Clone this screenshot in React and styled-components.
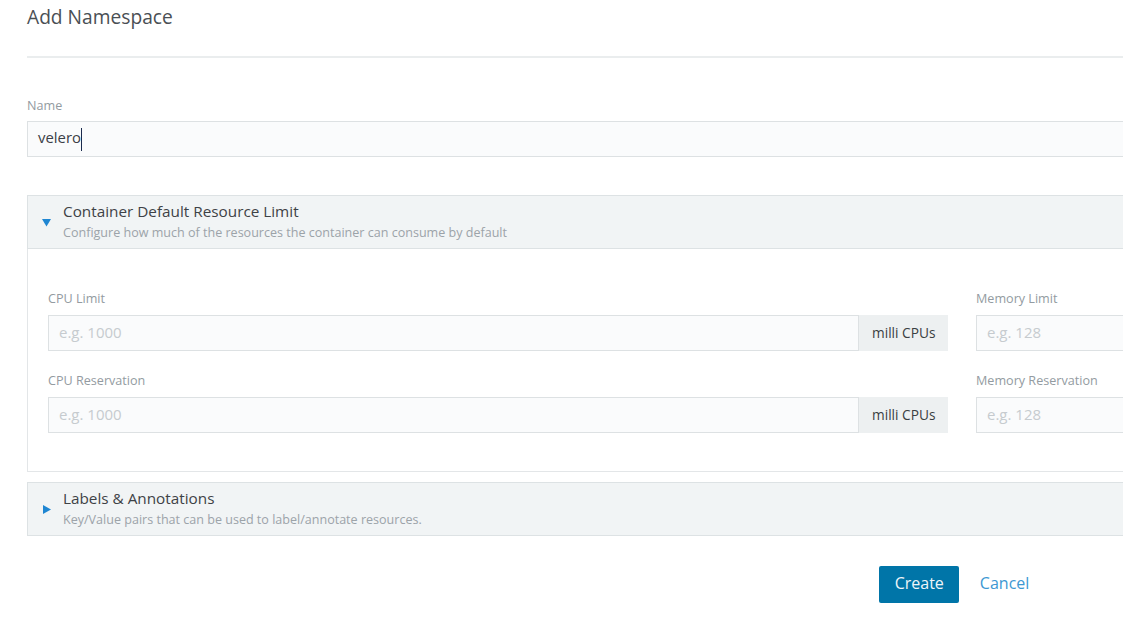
import React from "react";
import styled, { createGlobalStyle } from "styled-components";

const GlobalStyle = createGlobalStyle`
  html, body { margin: 0; padding: 0; overflow: hidden; background: #ffffff; }
  body { font-family: "Open Sans", "Liberation Sans", sans-serif; color: #444; }
  * { box-sizing: border-box; }
`;

const Page = styled.div`
  width: 1870px;
  margin-left: 27px;
  padding-top: 4px;
`;

const Header = styled.header`
  border-bottom: 2px solid #eaedee;
  padding-bottom: 26px;
`;

const Title = styled.h1`
  margin: 0;
  font-size: 19.2px;
  line-height: 26px;
  font-weight: 400;
  color: #4a4f54;
`;

const Field = styled.div`
  display: flex;
  flex-direction: column;
  margin-top: ${(p) => p.$top || 0}px;
`;

const Label = styled.label`
  font-size: 12.6px;
  line-height: 16px;
  color: #939ba1;
  margin-bottom: ${(p) => p.$gap || 8}px;
`;

const FakeInput = styled.div`
  height: 36px;
  border: 1px solid #dde1e3;
  background: #fafbfc;
  padding: 0 10px 3px;
  font-size: 14.9px;
  line-height: 31px;
  color: #3a4046;
  display: flex;
  align-items: center;
`;

const Caret = styled.span`
  display: inline-block;
  width: 1px;
  height: 23px;
  background: #1b2b4d;
  margin-top: 3px;
`;

const Accordion = styled.section`
  margin-top: ${(p) => p.$top}px;
`;

const AccHeader = styled.div`
  display: flex;
  align-items: center;
  background: #f1f4f5;
  border: 1px solid #dde2e4;
  padding: 5px 13px 7px;
`;

const Arrow = styled.svg`
  width: 11px;
  height: 11px;
  flex: none;
  margin-right: 11px;
  margin-top: 3px;
  fill: #1f86d2;
`;

const AccText = styled.div`
  display: flex;
  flex-direction: column;
  gap: 4px;
`;

const AccTitle = styled.div`
  font-size: 15.3px;
  line-height: 20px;
  color: #3e4246;
`;

const AccSub = styled.div`
  font-size: 12.56px;
  line-height: 16px;
  color: #9ca3a9;
`;

const AccBody = styled.div`
  border: 1px solid #e3e6e8;
  border-top: none;
  padding: 42px 20px 38px;
  display: flex;
  flex-direction: column;
  gap: 22px;
`;

const Grid = styled.div`
  display: grid;
  grid-template-columns: 1fr 1fr;
  column-gap: 28px;
`;

const InputGroup = styled.div`
  display: flex;
  height: 36px;
`;

const TextInput = styled.input`
  flex: 1;
  min-width: 0;
  height: 36px;
  border: 1px solid #dde1e3;
  background: #fafbfc;
  padding: 0 10px 2px;
  font-family: inherit;
  font-size: 15px;
  color: #343a40;
  outline: none;
  &::placeholder { color: #c6cbcf; }
`;

const Addon = styled.div`
  flex: none;
  width: 89px;
  background: #edf0f1;
  display: flex;
  align-items: center;
  padding: 0 0 2px 13px;
  font-size: 13.7px;
  color: #3a3e42;
`;

const Footer = styled.div`
  display: flex;
  justify-content: center;
  gap: 5px;
  margin-top: 30px;
`;

const Button = styled.button`
  height: 37px;
  padding: 0 15.5px 3px;
  border: none;
  border-radius: 2px;
  font-family: inherit;
  font-size: 16px;
  line-height: 34px;
  cursor: pointer;
  background: ${(p) => (p.$primary ? "#0075a8" : "transparent")};
  color: ${(p) => (p.$primary ? "#eef5f9" : "#3d98d3")};
`;

const DownArrow = () => (
  <Arrow viewBox="0 0 11 11">
    <polygon points="1,2 10,2 5.5,9.5" />
  </Arrow>
);

const RightArrow = () => (
  <Arrow viewBox="0 0 11 11">
    <polygon points="2,1 10,5.5 2,10" />
  </Arrow>
);

const LimitField = ({ label, placeholder, addon }) => (
  <Field>
    <Label>{label}</Label>
    <InputGroup>
      <TextInput placeholder={placeholder} />
      {addon && <Addon>{addon}</Addon>}
    </InputGroup>
  </Field>
);

export default function App() {
  return (
    <>
      <GlobalStyle />
      <Page>
        <Header>
          <Title>Add Namespace</Title>
        </Header>

        <Field $top={40}>
          <Label $gap={7}>Name</Label>
          <FakeInput>
            velero
            <Caret />
          </FakeInput>
        </Field>

        <Accordion $top={38}>
          <AccHeader>
            <DownArrow />
            <AccText>
              <AccTitle>Container Default Resource Limit</AccTitle>
              <AccSub>Configure how much of the resources the container can consume by default</AccSub>
            </AccText>
          </AccHeader>
          <AccBody>
            <Grid>
              <LimitField label="CPU Limit" placeholder="e.g. 1000" addon="milli CPUs" />
              <LimitField label="Memory Limit" placeholder="e.g. 128" />
            </Grid>
            <Grid>
              <LimitField label="CPU Reservation" placeholder="e.g. 1000" addon="milli CPUs" />
              <LimitField label="Memory Reservation" placeholder="e.g. 128" />
            </Grid>
          </AccBody>
        </Accordion>

        <Accordion $top={10}>
          <AccHeader>
            <RightArrow />
            <AccText>
              <AccTitle>Labels &amp; Annotations</AccTitle>
              <AccSub>Key/Value pairs that can be used to label/annotate resources.</AccSub>
            </AccText>
          </AccHeader>
        </Accordion>

        <Footer>
          <Button $primary>Create</Button>
          <Button>Cancel</Button>
        </Footer>
      </Page>
    </>
  );
}
